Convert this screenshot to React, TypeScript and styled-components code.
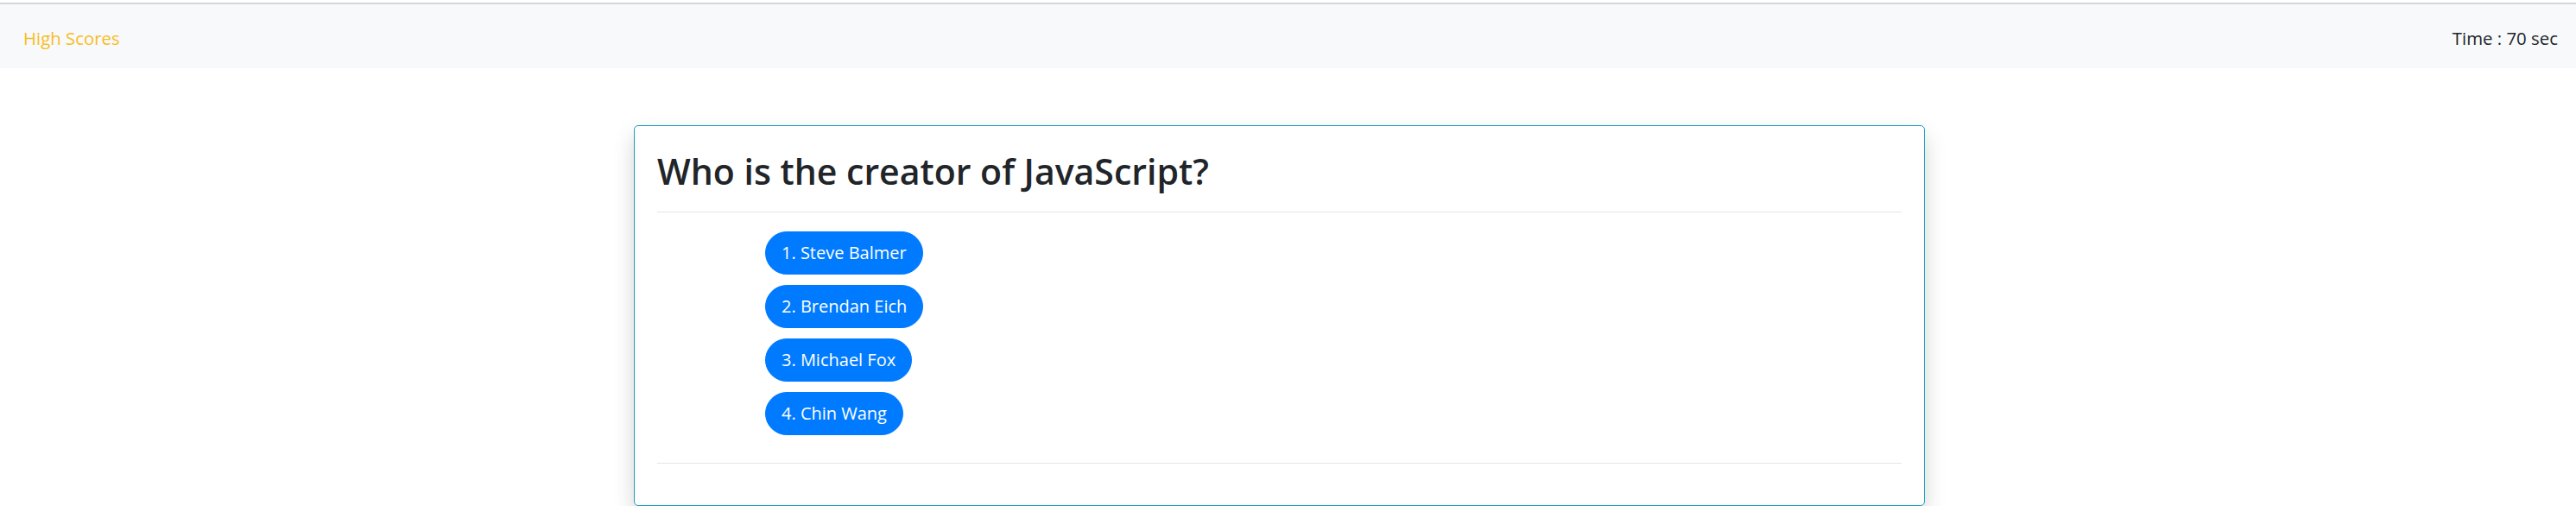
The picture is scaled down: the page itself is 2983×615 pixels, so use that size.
import React from 'react';
import styled, { createGlobalStyle } from 'styled-components';

const ANSWERS = ['1. Steve Balmer', '2. Brendan Eich', '3. Michael Fox', '4. Chin Wang'];

const GlobalStyle = createGlobalStyle`
  html, body {
    margin: 0;
    padding: 0;
    background: #ffffff;
    font-family: "Open Sans", "Noto Sans", sans-serif;
    color: #212529;
  }
`;

const Page = styled.div`
  padding-top: 3px;
`;

const Navbar = styled.nav`
  height: 70px;
  padding: 4px 21px 0 27px;
  border-top: 2px solid #d3d5d8;
  background: #f8f9fa;
  display: flex;
  align-items: center;
  justify-content: space-between;
`;

const NavText = styled.span<{ $accent?: boolean }>`
  font-size: 20.4px;
  line-height: 32px;
  color: ${(p) => (p.$accent ? '#f7bd1e' : '#212529')};
`;

const Main = styled.main`
  padding: 66px 20px 0 0;
  display: flex;
  justify-content: center;
`;

const Card = styled.section`
  width: 1495px;
  box-sizing: border-box;
  padding: 27px 26px;
  border: 1px solid #17a2b8;
  border-radius: 5px;
  background: #ffffff;
  box-shadow: 0 12px 24px rgba(0, 0, 0, 0.17);
`;

const Question = styled.h2`
  margin: 0 0 21px 0;
  font-size: 41px;
  line-height: 51px;
  font-weight: 600;
  color: #212529;
`;

const Divider = styled.hr<{ $mt?: number; $mb?: number }>`
  margin: ${(p) => p.$mt ?? 0}px 0 ${(p) => p.$mb ?? 0}px 0;
  border: 0;
  border-top: 1px solid rgba(0, 0, 0, 0.1);
`;

const AnswerList = styled.div`
  margin: 22px 0 32px 125px;
  display: flex;
  flex-direction: column;
  align-items: flex-start;
  gap: 12px;
`;

const AnswerButton = styled.button`
  padding: 9px 18px;
  border: 1px solid #007bff;
  border-radius: 25px;
  background: #007bff;
  color: #ffffff;
  font-family: "Open Sans", "Noto Sans", sans-serif;
  font-size: 20px;
  line-height: 30px;
  cursor: pointer;
`;

const App = () => {
  return (
    <Page>
      <GlobalStyle />
      <Navbar>
        <NavText $accent>High Scores</NavText>
        <NavText>Time : 70 sec</NavText>
      </Navbar>
      <Main>
        <Card>
          <Question>Who is the creator of JavaScript?</Question>
          <Divider />
          <AnswerList>
            {ANSWERS.map((answer) => (
              <AnswerButton key={answer}>{answer}</AnswerButton>
            ))}
          </AnswerList>
          <Divider $mb={21} />
        </Card>
      </Main>
    </Page>
  );
};

export default App;
